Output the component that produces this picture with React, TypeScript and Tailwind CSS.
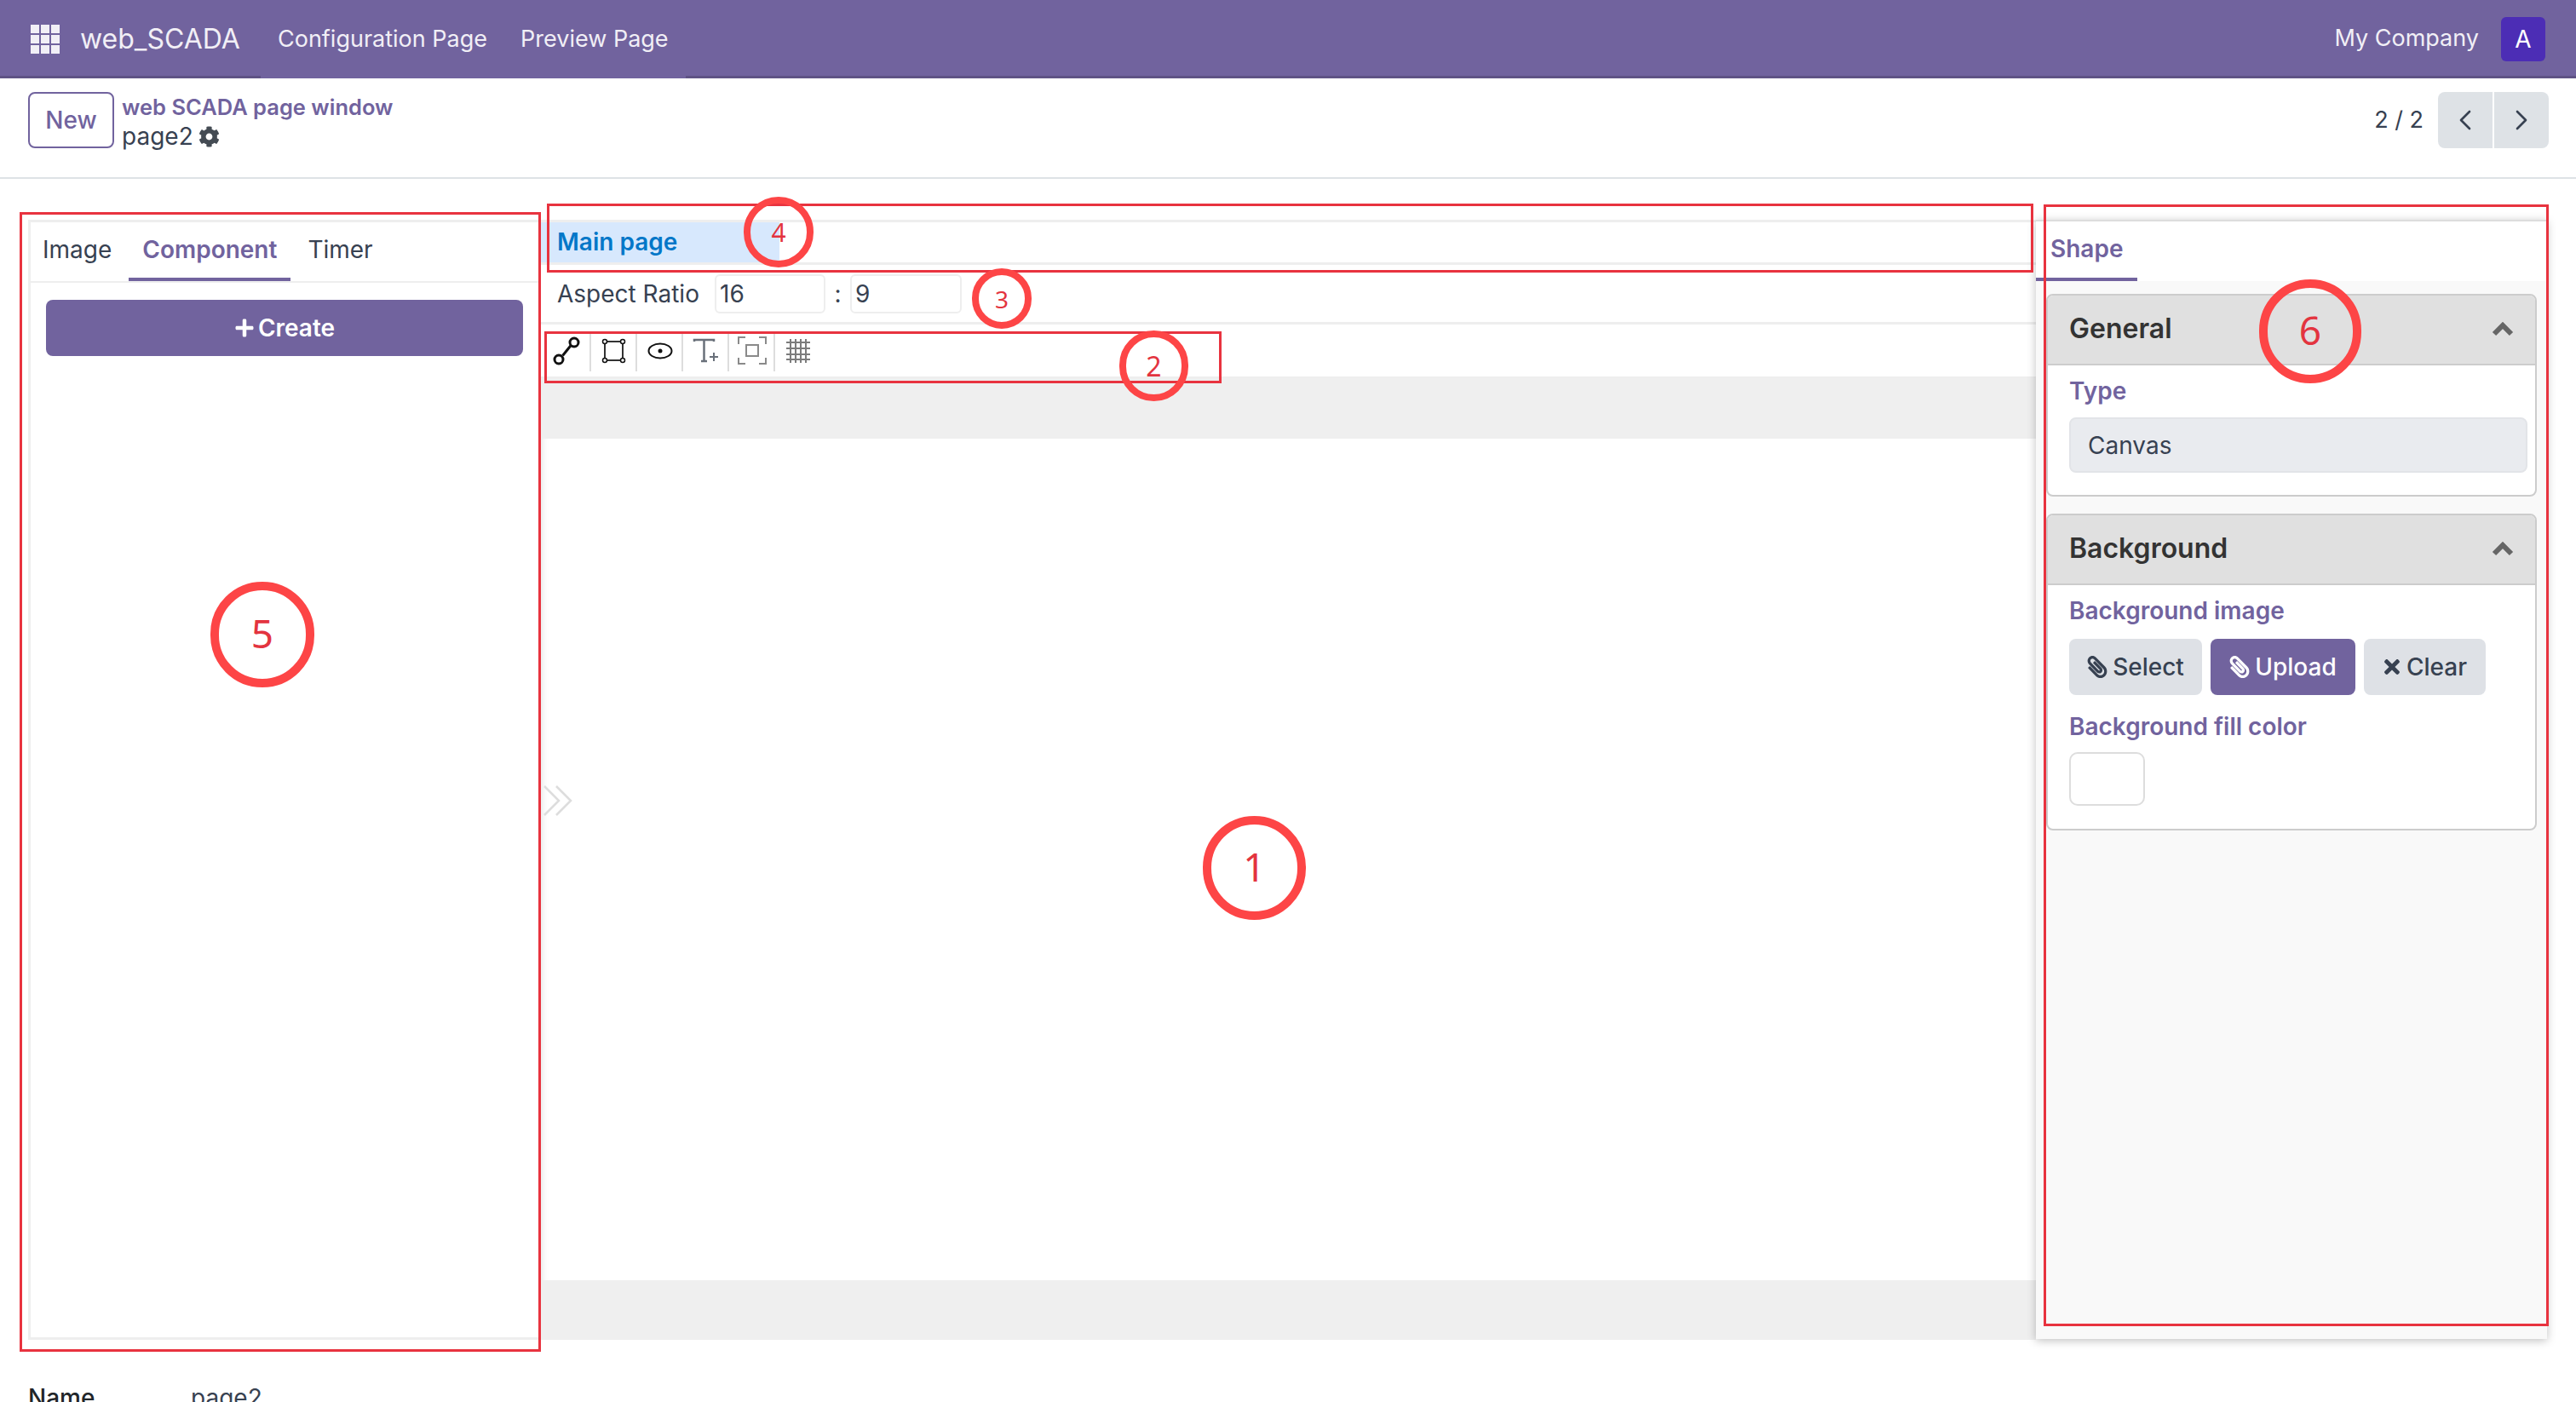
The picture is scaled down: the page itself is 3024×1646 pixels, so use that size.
import { ChevronLeft, ChevronRight } from "lucide-react";
import { FaCog, FaPaperclip, FaPlus, FaTimes } from "react-icons/fa";

function AppsIcon() {
  const cells = [0, 12, 24];
  return (
    <svg width="34" height="34" viewBox="0 0 34 34" className="shrink-0">
      {cells.map((y) => cells.map((x) => <rect key={`${x}-${y}`} x={x} y={y} width="10" height="10" fill="#f1eff6" />))}
    </svg>
  );
}

function LineTool() {
  return (
    <svg width="54" height="46" viewBox="0 0 54 46">
      <path d="M22.5 27.5 33 14.5" stroke="#111" strokeWidth="3" />
      <circle cx="18" cy="32" r="5" fill="#fff" stroke="#111" strokeWidth="3" />
      <circle cx="36" cy="12" r="5" fill="#fff" stroke="#111" strokeWidth="3" />
    </svg>
  );
}

function RectTool() {
  return (
    <svg width="54" height="46" viewBox="0 0 54 46">
      <rect x="16" y="11" width="21" height="22" fill="none" stroke="#333" strokeWidth="2" />
      {[[16, 11], [37, 11], [16, 33], [37, 33]].map(([cx, cy]) => (
        <circle key={`${cx}-${cy}`} cx={cx} cy={cy} r="2.5" fill="#fff" stroke="#111" strokeWidth="1.5" />
      ))}
    </svg>
  );
}

function EllipseTool() {
  return (
    <svg width="54" height="46" viewBox="0 0 54 46">
      <ellipse cx="27" cy="22" rx="13.5" ry="8.5" fill="none" stroke="#111" strokeWidth="2" />
      <circle cx="27" cy="22" r="2.5" fill="#111" />
    </svg>
  );
}

function TextTool() {
  return (
    <svg width="54" height="46" viewBox="0 0 54 46">
      <path d="M13 11V9h23v2M24.5 9v25M21 34h7" fill="none" stroke="#69707a" strokeWidth="2.5" />
      <path d="M31 29h10M36 24v10" stroke="#69707a" strokeWidth="2" />
    </svg>
  );
}

function FitTool() {
  return (
    <svg width="54" height="46" viewBox="0 0 54 46">
      <path d="M11 14V6h8M35 6h8v8M43 30v7h-8M19 37h-8v-7" fill="none" stroke="#8a8a8a" strokeWidth="2" />
      <rect x="20" y="15" width="14" height="13" fill="none" stroke="#8a8a8a" strokeWidth="2" />
    </svg>
  );
}

function GridTool() {
  return (
    <svg width="54" height="46" viewBox="0 0 54 46">
      <path d="M18 8v28M24 8v28M30 8v28M36 8v28M13 12h28M13 19h28M13 26h28M13 32h28" stroke="#7c7c7c" strokeWidth="2" />
    </svg>
  );
}

function CollapseIcon() {
  return (
    <svg width="26" height="18" viewBox="0 0 26 18">
      <path d="M3 15 13 5l10 10" fill="none" stroke="#666666" strokeWidth="6" />
    </svg>
  );
}

function Toolbar() {
  return (
    <div className="flex h-[63px] items-start border-b-[2px] border-[#eeeeee] pl-[3px] pt-[9px]">
      <div className="h-[46px] w-[56px] border-r-[2px] border-[#dddddd]"><LineTool /></div>
      <div className="h-[46px] w-[54px] border-r-[2px] border-[#dddddd]"><RectTool /></div>
      <div className="h-[46px] w-[54px] border-r-[2px] border-[#dddddd]"><EllipseTool /></div>
      <div className="h-[46px] w-[54px] border-r-[2px] border-[#dddddd]"><TextTool /></div>
      <div className="h-[46px] w-[54px] border-r-[2px] border-[#dddddd]"><FitTool /></div>
      <div className="h-[46px] w-[54px]"><GridTool /></div>
    </div>
  );
}

function LeftPanel() {
  return (
    <div className="flex w-[602px] shrink-0 flex-col border-y-[3px] border-l-[3px] border-[#eeeeee]">
      <div className="flex h-[71px] gap-[4px] border-b-[2px] border-[#eeeeee] text-[28px]">
        <div className="-ml-[2px] flex items-center px-[16px] pb-[6px] text-[#374151]">Image</div>
        <div className="flex items-center border-b-[4px] border-[#71639e] px-[16px] pb-[2px] font-semibold text-[#71639e]">Component</div>
        <div className="flex items-center px-[16px] pb-[6px] text-[#374151]">Timer</div>
      </div>
      <div className="pl-[18px] pr-[21px] pt-[20px]">
        <button className="flex h-[66px] w-full items-center justify-center gap-[4px] rounded-[8px] bg-[#71639e] text-[28px] font-semibold text-white">
          <FaPlus className="h-[24px] w-[24px]" />
          Create
        </button>
      </div>
    </div>
  );
}

function Canvas() {
  return (
    <div className="flex min-w-0 flex-1 flex-col">
      <div className="flex h-[53px] border-y-[3px] border-[#eeeeee]">
        <div className="flex w-[280px] items-center bg-[#d7e8fd] pb-[2px] pl-[19px] text-[28px] font-semibold text-[#0277c8]">Main page</div>
      </div>
      <div className="flex h-[70px] items-center border-b-[3px] border-[#eeeeee] pl-[19px] text-[28px] text-[#374151]">
        <span className="w-[185px]">Aspect Ratio</span>
        <div className="flex h-[46px] w-[130px] items-center rounded-[6px] border-[2px] border-[#eeeeee] pl-[4px]">16</div>
        <span className="w-[29px] text-center">:</span>
        <div className="flex h-[46px] w-[131px] items-center rounded-[6px] border-[2px] border-[#eeeeee] pl-[4px]">9</div>
      </div>
      <Toolbar />
      <div className="h-[71px] bg-[#efefef]" />
      <div className="relative flex-1 bg-white shadow-[inset_9px_0_8px_-8px_rgba(0,0,0,0.12)]">
        <svg width="36" height="38" viewBox="0 0 36 38" className="absolute left-[2px] top-[406px]">
          <path d="M2 2l17 17L2 36M16 2l17 17-17 17" fill="none" stroke="#dddddd" strokeWidth="2.5" />
        </svg>
      </div>
      <div className="h-[70px] bg-[#efefef]" />
    </div>
  );
}

function Card({ title, children }: { title: string; children: React.ReactNode }) {
  return (
    <div className="overflow-hidden rounded-[8px] border-[2px] border-[#cccccc] bg-white">
      <div className="flex h-[82px] items-center justify-between border-b-[2px] border-[#cccccc] bg-[#e0e0e0] pb-[2px] pl-[25px] pr-[25px]">
        <span className="text-[32px] font-semibold text-[#333333]">{title}</span>
        <CollapseIcon />
      </div>
      {children}
    </div>
  );
}

function RightPanel() {
  return (
    <div className="z-10 flex h-[1314px] w-[600px] shrink-0 flex-col border-t-[2px] border-[#dddddd] bg-[#f9f9f9] shadow-[0_2px_10px_rgba(0,0,0,0.25)]">
      <div className="h-[70px] bg-white">
        <div className="flex h-full w-[119px] items-center border-b-[4px] border-[#71639e] pb-[2px] pl-[17px] text-[28px] font-semibold text-[#71639e]">Shape</div>
      </div>
      <div className="flex flex-col gap-[20px] pl-[12px] pr-[12px] pt-[15px]">
        <Card title="General">
          <div className="h-[152px] px-[25px] pt-[12px]">
            <div className="text-[28px] font-semibold leading-[36px] text-[#71639e]">Type</div>
            <div className="mt-[13px] flex h-[65px] w-[538px] items-center rounded-[8px] border-[2px] border-[#e2e4e8] bg-[#e9ebef] pl-[20px] text-[28px] text-[#374151]">Canvas</div>
          </div>
        </Card>
        <Card title="Background">
          <div className="h-[286px] px-[25px] pt-[12px]">
            <div className="text-[28px] font-semibold leading-[36px] text-[#71639e]">Background image</div>
            <div className="mt-[15px] flex gap-[10px] text-[28px] font-medium">
              <button className="flex h-[66px] w-[156px] items-center justify-center gap-[6px] rounded-[8px] bg-[#dee1e6] text-[#374151]">
                <FaPaperclip className="h-[26px] w-[24px] -scale-x-100" />
                Select
              </button>
              <button className="flex h-[66px] w-[170px] items-center justify-center gap-[6px] rounded-[8px] bg-[#71639e] text-white">
                <FaPaperclip className="h-[26px] w-[24px] -scale-x-100" />
                Upload
              </button>
              <button className="flex h-[66px] w-[143px] items-center justify-center gap-[6px] rounded-[8px] bg-[#dee1e6] text-[#374151]">
                <FaTimes className="h-[26px] w-[22px]" />
                Clear
              </button>
            </div>
            <div className="mt-[19px] text-[28px] font-semibold leading-[36px] text-[#71639e]">Background fill color</div>
            <div className="mt-[12px] h-[63px] w-[89px] rounded-[10px] border-[2px] border-[#dddddd] bg-white" />
          </div>
        </Card>
      </div>
    </div>
  );
}

function Annotations() {
  return (
    <div className="absolute inset-0 z-20">
      <div className="absolute left-[23px] top-[249px] h-[1338px] w-[612px] border-[3px] border-[#e8333f]" />
      <div className="absolute left-[642px] top-[239px] h-[81px] w-[1745px] border-[3px] border-[#e8333f]" />
      <div className="absolute left-[639px] top-[389px] h-[61px] w-[795px] border-[3px] border-[#e8333f]" />
      <div className="absolute left-[2399px] top-[240px] h-[1317px] w-[593px] border-[3px] border-[#e8333f]" />

      <div className="absolute left-[1412px] top-[958px] flex h-[122px] w-[121px] items-center justify-center rounded-full border-[10px] border-[#fd4546] pb-[4px] font-['Noto_Sans',sans-serif] text-[46px] text-[#e3343f]">1</div>
      <div className="absolute left-[1314px] top-[388px] flex h-[83px] w-[81px] items-center justify-center rounded-full border-[8px] border-[#fd4546] font-['Noto_Sans',sans-serif] text-[32px] text-[#e3343f]">2</div>
      <div className="absolute left-[1141px] top-[315px] flex h-[71px] w-[70px] items-center justify-center rounded-full border-[8px] border-[#fd4546] font-['Noto_Sans',sans-serif] text-[28px] text-[#e3343f]">3</div>
      <div className="absolute left-[873px] top-[231px] flex h-[83px] w-[82px] items-center justify-center rounded-full border-[8px] border-[#fd4546] font-['Noto_Sans',sans-serif] text-[30px] text-[#e3343f]">4</div>
      <div className="absolute left-[247px] top-[683px] flex h-[124px] w-[122px] items-center justify-center rounded-full border-[10px] border-[#fd4546] pb-[4px] font-['Noto_Sans',sans-serif] text-[46px] text-[#e3343f]">5</div>
      <div className="absolute left-[2652px] top-[328px] flex h-[122px] w-[120px] items-center justify-center rounded-full border-[10px] border-[#fd4546] pb-[4px] font-['Noto_Sans',sans-serif] text-[46px] text-[#e3343f]">6</div>
    </div>
  );
}

export default function App() {
  return (
    <div className="relative h-[1646px] w-[3024px] overflow-hidden bg-white font-['Inter',sans-serif] text-[28px] text-[#374151]">
      <nav className="flex h-[92px] bg-[#71639e] text-[27px] text-[#f1eff6]">
        <div className="flex w-[306px] items-center gap-[24px] border-b-[3px] border-[#5f5385] pl-[36px] pt-[2px]">
          <AppsIcon />
          <span className="text-[32px]">web_SCADA</span>
        </div>
        <div className="flex w-[499px] items-center gap-[39px] pl-[20px]">
          <span>Configuration Page</span>
          <span>Preview Page</span>
        </div>
        <div className="flex flex-1 items-center justify-end gap-[26px] border-b-[3px] border-[#5f5385] pr-[36px] pt-[2px]">
          <span>My Company</span>
          <div className="flex h-[52px] w-[52px] items-center justify-center rounded-[6px] bg-[#4c2db5] text-[28px] text-white">A</div>
        </div>
      </nav>

      <div className="flex h-[118px] items-start justify-between border-b-[2px] border-[#dee2e6] pl-[33px] pr-[32px] pt-[16px]">
        <div className="flex gap-[9px]">
          <button className="h-[66px] w-[101px] rounded-[8px] border-[2px] border-[#71639e] font-medium text-[#71639e]">New</button>
          <div>
            <div className="text-[25.5px] font-semibold leading-[35px] text-[#71639e]">web SCADA page window</div>
            <div className="flex items-center gap-[6px] leading-[35px]">
              page2
              <FaCog className="h-[25px] w-[25px] text-[#444b53]" />
            </div>
          </div>
        </div>
        <div className="flex items-center gap-[17px]">
          <span className="text-[27px]">2 / 2</span>
          <div className="flex h-[66px] w-[130px] overflow-hidden rounded-[8px] bg-[#dee2e6]">
            <div className="flex flex-1 items-center justify-center border-r-[2px] border-white"><ChevronLeft className="h-[40px] w-[40px]" strokeWidth={1.6} /></div>
            <div className="flex flex-1 items-center justify-center"><ChevronRight className="h-[40px] w-[40px]" strokeWidth={1.6} /></div>
          </div>
        </div>
      </div>

      <div className="mt-[48px] flex h-[1315px] pl-[33px] pr-[34px]">
        <LeftPanel />
        <Canvas />
        <RightPanel />
      </div>

      <div className="mt-[47px] flex pl-[33px]">
        <span className="w-[191px] font-medium text-[#212529]">Name</span>
        <span>page2</span>
      </div>

      <Annotations />
    </div>
  );
}
